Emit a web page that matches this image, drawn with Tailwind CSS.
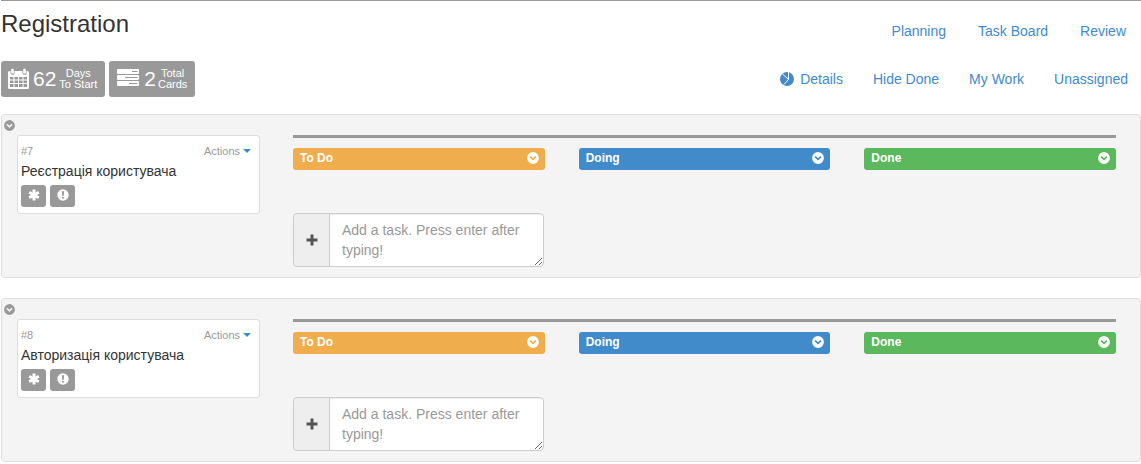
<!DOCTYPE html>
<html lang="en">
<head>
<meta charset="utf-8">
<title>Registration</title>
<script src="https://cdn.jsdelivr.net/npm/@tailwindcss/browser@4"></script>
</head>
<body class="bg-white pl-px font-['Liberation_Sans',Arial,sans-serif] text-sm text-[#333]">
<svg class="hidden">
  <symbol id="chevron" viewBox="0 0 12 12"><path fill="currentColor" fill-rule="evenodd" d="M6 .1a5.900 5.900 0 1 0 0 11.800A5.900 5.900 0 0 0 6 .1zM2.500 5.300 3.700 4 6 6.200 8.300 4l1.200 1.300L6 8.600z"/></symbol>
  <symbol id="asterisk" viewBox="0 0 12 12"><path stroke="currentColor" stroke-width="3" d="M6 .6v10.8M1.200 3.300l9.600 5.400M1.200 8.700l9.600-5.400"/></symbol>
  <symbol id="alert" viewBox="0 0 12 12"><path fill="currentColor" fill-rule="evenodd" d="M6 .3a5.700 5.700 0 1 0 0 11.400A5.700 5.700 0 0 0 6 .3zM4.900 2.200h2.200l-.4 4.800H5.300zM5.100 7.900h1.800v1.700H5.100z"/></symbol>
  <symbol id="plus" viewBox="0 0 12 12"><path fill="currentColor" d="M4.500.5h3v4h4v3h-4v4h-3v-4h-4v-3h4z"/></symbol>
</svg>
<header class="border-t border-[#999]">
  <div class="flex items-start justify-between pt-[10px]">
    <h1 class="text-[24px] leading-[26px]">Registration</h1>
    <nav class="flex gap-8 pr-[15px] pt-[10px] leading-5 text-[#428bca]">
      <a href="#planning">Planning</a><a href="#board">Task Board</a><a href="#review">Review</a>
    </nav>
  </div>
  <div class="mt-5 flex items-start justify-between">
    <div class="flex gap-1 text-white">
      <div class="flex h-9 items-center rounded-[3px] bg-[#999] pl-[7px] pr-2">
        <svg class="h-[22px] w-[21px]" viewBox="0 0 21 22"><path fill="currentColor" fill-rule="evenodd" d="M0 4.500Q0 3 1.500 3H2.500v2.500q0 1.200 2 1.200t2-1.200V3h8v2.500q0 1.200 2 1.200t2-1.200V3h1Q21 3 21 4.500v15q0 1.500-1.500 1.500h-18Q0 21 0 19.500zM2 9v2.500h3.500V9zm4.500 0v2.500H10V9zM11 9v2.500h3.500V9zm4.500 0v2.500H19V9zM2 12.500v2.500h3.500v-2.500zm4.500 0v2.500H10v-2.500zm4.500 0v2.500h3.500v-2.500zm4.500 0v2.500H19v-2.500zM2 16v3h3.500v-3zm4.500 0v3H10v-3zm4.500 0v3h3.500v-3zm4.500 0v3H19v-3z"/><path fill="currentColor" d="M3.200 1.400q1.300-2 2.600 0v4H3.200zM15.200 1.400q1.300-2 2.600 0v4h-2.600z"/></svg>
        <span class="ml-1 text-[21px]">62</span>
        <span class="ml-[3px] text-center text-[11px] leading-[11px]">Days<br>To Start</span>
      </div>
      <div class="flex h-9 items-center rounded-[3px] bg-[#999] pl-2 pr-2">
        <svg class="mb-[2px] h-[18px] w-[22px]" viewBox="0 0 22 18"><path fill="currentColor" fill-rule="evenodd" d="M1 0h20q1 0 1 1v3q0 1-1 1H1q-1 0-1-1V1q0-1 1-1zm14 2v1h5.500v-1zM1 6h20q1 0 1 1v3q0 1-1 1H1q-1 0-1-1V7q0-1 1-1zm7 2v1h12.500v-1zM1 12h20q1 0 1 1v3q0 1-1 1H1q-1 0-1-1v-3q0-1 1-1zm11 2v1h8.500v-1z"/></svg>
        <span class="ml-[5px] text-[21px]">2</span>
        <span class="ml-[2px] text-center text-[11px] leading-[11px]">Total<br>Cards</span>
      </div>
    </div>
    <nav class="flex gap-[30px] pr-[13px] pt-2 leading-5 text-[#428bca]">
      <a href="#details" class="flex items-center gap-[6px]"><svg class="size-[14px]" viewBox="0 0 14 14"><circle cx="7" cy="7" r="7" fill="currentColor"/><path fill="none" stroke="#fff" d="M8.500 0v7.500L2 1.500M8.500 7.500 4 12.500"/></svg>Details</a>
      <a href="#hide">Hide Done</a><a href="#mine">My Work</a><a href="#unassigned">Unassigned</a>
    </nav>
  </div>
</header>
<main class="mt-[17px] flex flex-col gap-5">
  <section class="rounded border border-[#ddd] bg-[#f4f4f4] pb-[10px] pl-[2px] pr-6 pt-[5px]">
    <button class="block h-[15px] text-[#999]" aria-label="Collapse card 7"><svg class="mb-1 size-[11px]"><use href="#chevron"/></svg></button>
    <div class="flex items-start gap-[33px] pl-[13px]">
      <article class="w-[243px] shrink-0 rounded-[3px] border border-[#ddd] bg-white px-[3px] pb-[6px] pt-[5px]">
        <div class="flex justify-between pr-[5px] text-[11px] leading-5 text-[#999]"><span>#7</span><button class="flex items-center gap-[3px]">Actions<svg class="h-1 w-2 text-[#428bca]" viewBox="0 0 8 4"><path fill="currentColor" d="M0 0h8L4 4z"/></svg></button></div>
        <h2 class="leading-5">Реєстрація користувача</h2>
        <div class="mt-1 flex gap-1 text-white">
          <button class="flex h-[22px] w-[25px] justify-center rounded-[3px] bg-[#999] pt-1" aria-label="Label"><svg class="size-3"><use href="#asterisk"/></svg></button>
          <button class="flex h-[22px] w-[25px] justify-center rounded-[3px] bg-[#999] pt-1" aria-label="Blocked"><svg class="size-3"><use href="#alert"/></svg></button>
        </div>
      </article>
      <div class="grid flex-1 grid-cols-3 gap-x-[34px] border-t-3 border-[#999] pt-[10px]">
        <div>
          <div class="flex h-[22px] items-start justify-between rounded-[3px] bg-[#f0ad4e] pl-[7px] pr-[6px] text-white"><h3 class="text-xs font-bold leading-5">To Do</h3><button class="pt-1" aria-label="Collapse To Do"><svg class="size-3"><use href="#chevron"/></svg></button></div>
          <div class="mr-px mt-[43px] flex h-[54px]">
            <button class="flex w-[37px] shrink-0 items-center justify-center rounded-l border border-[#ccc] bg-[#eee] text-[#555]" aria-label="Add task"><svg class="size-3"><use href="#plus"/></svg></button>
            <textarea class="-ml-px w-full min-w-0 flex-1 rounded-r border border-[#ccc] bg-white px-3 py-[6px] leading-5 shadow-[inset_0_1px_1px_rgba(0,0,0,0.075)] placeholder:text-[#999]" aria-label="New task" placeholder="Add a task. Press enter after typing!"></textarea>
          </div>
        </div>
        <div class="flex h-[22px] items-start justify-between rounded-[3px] bg-[#428bca] pl-[7px] pr-[6px] text-white"><h3 class="text-xs font-bold leading-5">Doing</h3><button class="pt-1" aria-label="Collapse Doing"><svg class="size-3"><use href="#chevron"/></svg></button></div>
        <div class="flex h-[22px] items-start justify-between rounded-[3px] bg-[#5cb85c] pl-[7px] pr-[6px] text-white"><h3 class="text-xs font-bold leading-5">Done</h3><button class="pt-1" aria-label="Collapse Done"><svg class="size-3"><use href="#chevron"/></svg></button></div>
      </div>
    </div>
  </section>
  <section class="rounded border border-[#ddd] bg-[#f4f4f4] pb-[10px] pl-[2px] pr-6 pt-[5px]">
    <button class="block h-[15px] text-[#999]" aria-label="Collapse card 8"><svg class="mb-1 size-[11px]"><use href="#chevron"/></svg></button>
    <div class="flex items-start gap-[33px] pl-[13px]">
      <article class="w-[243px] shrink-0 rounded-[3px] border border-[#ddd] bg-white px-[3px] pb-[6px] pt-[5px]">
        <div class="flex justify-between pr-[5px] text-[11px] leading-5 text-[#999]"><span>#8</span><button class="flex items-center gap-[3px]">Actions<svg class="h-1 w-2 text-[#428bca]" viewBox="0 0 8 4"><path fill="currentColor" d="M0 0h8L4 4z"/></svg></button></div>
        <h2 class="leading-5">Авторизація користувача</h2>
        <div class="mt-1 flex gap-1 text-white">
          <button class="flex h-[22px] w-[25px] justify-center rounded-[3px] bg-[#999] pt-1" aria-label="Label"><svg class="size-3"><use href="#asterisk"/></svg></button>
          <button class="flex h-[22px] w-[25px] justify-center rounded-[3px] bg-[#999] pt-1" aria-label="Blocked"><svg class="size-3"><use href="#alert"/></svg></button>
        </div>
      </article>
      <div class="grid flex-1 grid-cols-3 gap-x-[34px] border-t-3 border-[#999] pt-[10px]">
        <div>
          <div class="flex h-[22px] items-start justify-between rounded-[3px] bg-[#f0ad4e] pl-[7px] pr-[6px] text-white"><h3 class="text-xs font-bold leading-5">To Do</h3><button class="pt-1" aria-label="Collapse To Do"><svg class="size-3"><use href="#chevron"/></svg></button></div>
          <div class="mr-px mt-[43px] flex h-[54px]">
            <button class="flex w-[37px] shrink-0 items-center justify-center rounded-l border border-[#ccc] bg-[#eee] text-[#555]" aria-label="Add task"><svg class="size-3"><use href="#plus"/></svg></button>
            <textarea class="-ml-px w-full min-w-0 flex-1 rounded-r border border-[#ccc] bg-white px-3 py-[6px] leading-5 shadow-[inset_0_1px_1px_rgba(0,0,0,0.075)] placeholder:text-[#999]" aria-label="New task" placeholder="Add a task. Press enter after typing!"></textarea>
          </div>
        </div>
        <div class="flex h-[22px] items-start justify-between rounded-[3px] bg-[#428bca] pl-[7px] pr-[6px] text-white"><h3 class="text-xs font-bold leading-5">Doing</h3><button class="pt-1" aria-label="Collapse Doing"><svg class="size-3"><use href="#chevron"/></svg></button></div>
        <div class="flex h-[22px] items-start justify-between rounded-[3px] bg-[#5cb85c] pl-[7px] pr-[6px] text-white"><h3 class="text-xs font-bold leading-5">Done</h3><button class="pt-1" aria-label="Collapse Done"><svg class="size-3"><use href="#chevron"/></svg></button></div>
      </div>
    </div>
  </section>
</main>
</body>
</html>
